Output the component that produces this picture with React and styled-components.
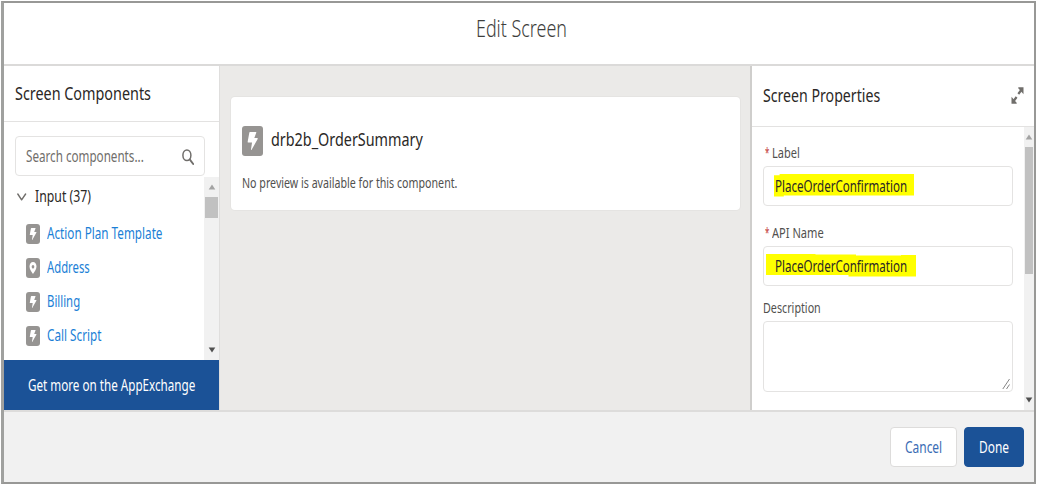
import React, { useLayoutEffect, useRef, useState } from "react";
import styled, { createGlobalStyle } from "styled-components";

const Global = createGlobalStyle`
  * { box-sizing: border-box; }
  html, body { margin: 0; background: #fff; }
  body { font-family: "Noto Sans", sans-serif; color: #2b2826; overflow: hidden; }
`;

const TextBox = styled.span`
  display: block;
  flex: none;
  width: ${(p) => p.$width}px;
  height: ${(p) => p.$size * 1.4}px;
  line-height: ${(p) => p.$size * 1.4}px;
  font-size: ${(p) => p.$size}px;
  font-weight: ${(p) => p.$weight || 400};
  color: ${(p) => p.$color || "#2b2826"};
  white-space: nowrap;
`;
const TextRun = styled.span`
  display: inline-block;
  transform-origin: 0 50%;
`;

/* Condenses a line of text to the given width. */
function Text({ width, size, weight, color, children }) {
  const ref = useRef(null);
  const [scale, setScale] = useState(0.8);
  useLayoutEffect(() => {
    setScale(width / ref.current.offsetWidth);
  }, [width, size, children]);
  return (
    <TextBox $width={width} $size={size} $weight={weight} $color={color}>
      <TextRun ref={ref} style={{ transform: `scaleX(${scale})` }}>{children}</TextRun>
    </TextBox>
  );
}

const Page = styled.div`
  width: 1037px;
  height: 485px;
  padding: 1px 1px 1px 1px;
  background: #fff;
`;
const Modal = styled.div`
  width: 1035px;
  height: 483px;
  display: flex;
  flex-direction: column;
  border: 2px solid #989896;
  border-left: 3px solid #a0a19f;
  background: #fff;
`;
const ModalHeader = styled.header`
  height: 63px;
  flex: none;
  display: flex;
  justify-content: center;
  padding: 8px 0 0 5px;
  border-bottom: 2px solid #dbdad9;
`;
const Body = styled.div`
  height: 344px;
  flex: none;
  display: flex;
  background: #ebeae8;
`;
const Footer = styled.footer`
  flex: 1;
  display: flex;
  justify-content: flex-end;
  gap: 7px;
  padding: 15px 10px 0 0;
  border-top: 2px solid #dddcdb;
  background: #f1f1f1;
`;

const LeftPanel = styled.aside`
  width: 216px;
  display: flex;
  flex-direction: column;
  background: #fff;
  border-right: 1px solid #dfdedd;
`;
const PanelHeader = styled.div`
  height: ${(p) => p.$height}px;
  flex: none;
  display: flex;
  align-items: center;
  justify-content: space-between;
  padding: 0 10px 2px 11px;
  border-bottom: 1px solid #e3e2e1;
`;
const SearchBox = styled.div`
  height: 40px;
  flex: none;
  margin: 14px 14px 1px 11px;
  padding: 2px 10px 0 10px;
  display: flex;
  align-items: center;
  justify-content: space-between;
  border: 1px solid #e4e3e2;
  border-radius: 4px;
`;
const ListArea = styled.div`
  flex: 1;
  display: flex;
  min-height: 0;
`;
const List = styled.div`
  flex: 1;
  display: flex;
  flex-direction: column;
`;
const GroupRow = styled.div`
  height: 39px;
  flex: none;
  display: flex;
  align-items: center;
  gap: 8px;
  padding: 0 0 1px 13px;
  svg { margin-top: 2px; }
`;
const ItemRow = styled.div`
  height: 34px;
  flex: none;
  display: flex;
  align-items: center;
  gap: 7px;
  padding: 2px 0 0 22px;
  & > span:last-child { margin-top: -1px; }
`;
const Badge = styled.span`
  width: ${(p) => p.$w}px;
  height: ${(p) => p.$h}px;
  flex: none;
  display: flex;
  border-radius: 3px;
  background: #969492;
  svg { width: 100%; height: 100%; }
`;
const AppExchange = styled.div`
  height: 50px;
  flex: none;
  display: flex;
  align-items: center;
  padding: 2px 0 0 24px;
  background: #1b5297;
`;

const Scrollbar = styled.div`
  width: ${(p) => p.$width}px;
  flex: none;
  display: flex;
  flex-direction: column;
  align-items: center;
  background: #f1f1f1;
  overflow: hidden;
`;
const ScrollArrow = styled.div`
  height: 20px;
  flex: none;
  display: flex;
  align-items: center;
  justify-content: center;
  svg { display: block; }
`;
const Thumb = styled.div`
  width: calc(100% - 2px);
  height: ${(p) => p.$height}px;
  background: #c1c1c1;
`;
const Track = styled.div`
  flex: 1;
`;

const Canvas = styled.main`
  flex: 1;
  padding: 31px 10px 0 11px;
`;
const Card = styled.section`
  height: 113px;
  padding: 29px 0 0 11px;
  display: flex;
  flex-direction: column;
  gap: 16px;
  background: #fff;
  border-radius: 4px;
  box-shadow: 0 0 0 1px #e5e4e2;
`;
const CardTitle = styled.div`
  display: flex;
  gap: 8px;
  height: 30px;
`;

const RightPanel = styled.aside`
  width: 284px;
  display: flex;
  flex-direction: column;
  background: #fff;
  border-left: 2px solid #cfcecc;
`;
const FormArea = styled.div`
  flex: 1;
  display: flex;
  min-height: 0;
`;
const Form = styled.div`
  flex: 1;
  display: flex;
  flex-direction: column;
  padding: 16px 11px 0 11px;
`;
const FieldLabel = styled.div`
  height: 23px;
  flex: none;
  display: flex;
  gap: 2px;
  padding-left: ${(p) => (p.$required ? 2 : 0)}px;
`;
const Field = styled.div`
  height: ${(p) => p.$height}px;
  flex: none;
  display: flex;
  align-items: center;
  margin-bottom: ${(p) => p.$gap || 0}px;
  padding: 0 0 0 ${(p) => p.$inset || 0}px;
  border: 1px solid #e4e3e2;
  border-radius: 4px;
`;
const Highlight = styled.div`
  width: ${(p) => p.$width}px;
  height: 25px;
  display: flex;
  align-items: center;
  padding-left: ${(p) => p.$pad}px;
  background: #ffff00;
  clip-path: polygon(${(p) => p.$shape});
`;
const TextArea = styled.div`
  height: 71px;
  flex: none;
  display: flex;
  align-items: flex-end;
  justify-content: flex-end;
  padding: 1px;
  border: 1px solid #e4e3e2;
  border-radius: 4px;
`;
const Button = styled.div`
  width: ${(p) => p.$width}px;
  height: 40px;
  display: flex;
  align-items: center;
  justify-content: center;
  padding-top: 2px;
  border: 1px solid ${(p) => (p.$primary ? "#1b5297" : "#dddcdb")};
  border-radius: 4px;
  background: ${(p) => (p.$primary ? "#1b5297" : "#fff")};
`;

const Bolt = () => (
  <svg viewBox="0 0 14 20" preserveAspectRatio="none">
    <path d="M5.300 4h4q.4 0 .2.500L8.200 8h2q.5 0 .25.600L6.400 15.800q-.5.500-.4-.3L6.700 11H4.200q-.5 0-.4-.6L4.900 4.400q.1-.4.4-.4z" fill="#fff" />
  </svg>
);
const Pin = () => (
  <svg viewBox="0 0 14 20" preserveAspectRatio="none">
    <path fillRule="evenodd" d="M7 4c-2 0-3.500 2-3.500 4.600C3.500 11.800 5.900 14.300 7 16c1.100-1.700 3.500-4.200 3.500-7.400C10.500 6 9 4 7 4zm0 2.900c.75 0 1.300.8 1.300 1.800S7.750 10.500 7 10.500s-1.300-.8-1.300-1.800S6.250 6.900 7 6.900z" fill="#fff" />
  </svg>
);
const SearchIcon = () => (
  <svg width="12" height="16" viewBox="0 0 12 16" fill="none" stroke="#706e6b">
    <ellipse cx="4.900" cy="6.300" rx="4" ry="5.300" strokeWidth="1.500" />
    <path d="M7.700 10.400L11.200 15" strokeWidth="1.900" strokeLinecap="round" />
  </svg>
);
const Chevron = () => (
  <svg width="10" height="8" viewBox="0 0 10 8" fill="none" stroke="#706e6b" strokeWidth="1.400" strokeLinecap="round" strokeLinejoin="round">
    <path d="M.8 1l3.800 5.800L8.600 1" />
  </svg>
);
const ExpandIcon = () => (
  <svg width="13" height="17" viewBox="0 0 13 17" fill="#706e6b" stroke="#706e6b">
    <path d="M7.200.3h5.300v7L7.500 1.500z" stroke="none" />
    <path d="M7.300 7L10.700 2.500M2.300 14.500L5.600 10" strokeWidth="2.200" fill="none" />
    <path d="M.5 9.700v7h5.300L5.400 15.500z" stroke="none" />
  </svg>
);
const Triangle = ({ down, color }) => (
  <svg width="8" height="6" viewBox="0 0 8 6">
    <path d={down ? "M.7 .5h6.600L4 5.500z" : "M.7 5.500h6.600L4 .5z"} fill={color} />
  </svg>
);
const Grip = () => (
  <svg width="9" height="12" viewBox="0 0 9 12" stroke="#777" strokeWidth=".9">
    <path d="M.8 11L7.500 1M4.500 11L7.500 6.500" fill="none" />
  </svg>
);

const items = [
  { name: "Action Plan Template", width: 115.500, Icon: Bolt },
  { name: "Address", width: 43, Icon: Pin },
  { name: "Billing", width: 33, Icon: Bolt },
  { name: "Call Script", width: 54.500, Icon: Bolt },
];

export default function App() {
  return (
    <Page>
      <Global />
      <Modal>
        <ModalHeader>
          <Text width={91} size={24} weight={300} color="#3e3e3c">Edit Screen</Text>
        </ModalHeader>
        <Body>
          <LeftPanel>
            <PanelHeader $height={56}>
              <Text width={136} size={18.500}>Screen Components</Text>
            </PanelHeader>
            <SearchBox>
              <Text width={118} size={15.500} color="#706e6b">Search components...</Text>
              <SearchIcon />
            </SearchBox>
            <ListArea>
              <List>
                <GroupRow>
                  <Chevron />
                  <Text width={56} size={16}>Input (37)</Text>
                </GroupRow>
                {items.map(({ name, width, Icon }) => (
                  <ItemRow key={name}>
                    <Badge $w={14} $h={20}><Icon /></Badge>
                    <Text width={width} size={15.500} color="#1b7fd6">{name}</Text>
                  </ItemRow>
                ))}
              </List>
              <Scrollbar $width={15}>
                <ScrollArrow><Triangle color="#a3a3a3" /></ScrollArrow>
                <Thumb $height={21} />
                <Track />
                <ScrollArrow><Triangle down color="#505050" /></ScrollArrow>
              </Scrollbar>
            </ListArea>
            <AppExchange>
              <Text width={167} size={15.500} color="#fff">Get more on the AppExchange</Text>
            </AppExchange>
          </LeftPanel>
          <Canvas>
            <Card>
              <CardTitle>
                <Badge $w={21} $h={30}><Bolt /></Badge>
                <Text width={151.500} size={18.500}>drb2b_OrderSummary</Text>
              </CardTitle>
              <Text width={215.500} size={14.500} color="#51504e">No preview is available for this component.</Text>
            </Card>
          </Canvas>
          <RightPanel>
            <PanelHeader $height={61}>
              <Text width={117} size={18.500}>Screen Properties</Text>
              <ExpandIcon />
            </PanelHeader>
            <FormArea>
              <Form>
                <FieldLabel $required>
                  <Text width={4.500} size={14} color="#c23934">*</Text>
                  <Text width={27.500} size={14} color="#51504e">Label</Text>
                </FieldLabel>
                <Field $height={40} $gap={17} $inset={10}>
                  <Highlight $width={140} $pad={1} $shape="0 7%, 4% 7%, 4% 2%, 100% 2%, 100% 88%, 7% 88%, 7% 92%, 0 92%">
                    <Text width={132} size={16}>PlaceOrderConfirmation</Text>
                  </Highlight>
                </Field>
                <FieldLabel $required>
                  <Text width={4.500} size={14} color="#c23934">*</Text>
                  <Text width={51.500} size={14} color="#51504e">API Name</Text>
                </FieldLabel>
                <Field $height={40} $gap={12} $inset={2}>
                  <Highlight $width={150} $pad={9} $shape="0 0, 33% 0, 33% 4%, 60% 4%, 60% 8%, 90% 8%, 90% 6%, 100% 6%, 100% 92%, 55% 92%, 55% 86%, 0 86%">
                    <Text width={132} size={16}>PlaceOrderConfirmation</Text>
                  </Highlight>
                </Field>
                <FieldLabel>
                  <Text width={57.500} size={14} color="#51504e">Description</Text>
                </FieldLabel>
                <TextArea><Grip /></TextArea>
              </Form>
              <Scrollbar $width={10}>
                <ScrollArrow><Triangle color="#a3a3a3" /></ScrollArrow>
                <Thumb $height={127} />
                <Track />
                <ScrollArrow><Triangle down color="#505050" /></ScrollArrow>
              </Scrollbar>
            </FormArea>
          </RightPanel>
        </Body>
        <Footer>
          <Button $width={67}>
            <Text width={37} size={15.500} color="#3a6cb4">Cancel</Text>
          </Button>
          <Button $width={60} $primary>
            <Text width={30} size={15.500} color="#fff">Done</Text>
          </Button>
        </Footer>
      </Modal>
    </Page>
  );
}
